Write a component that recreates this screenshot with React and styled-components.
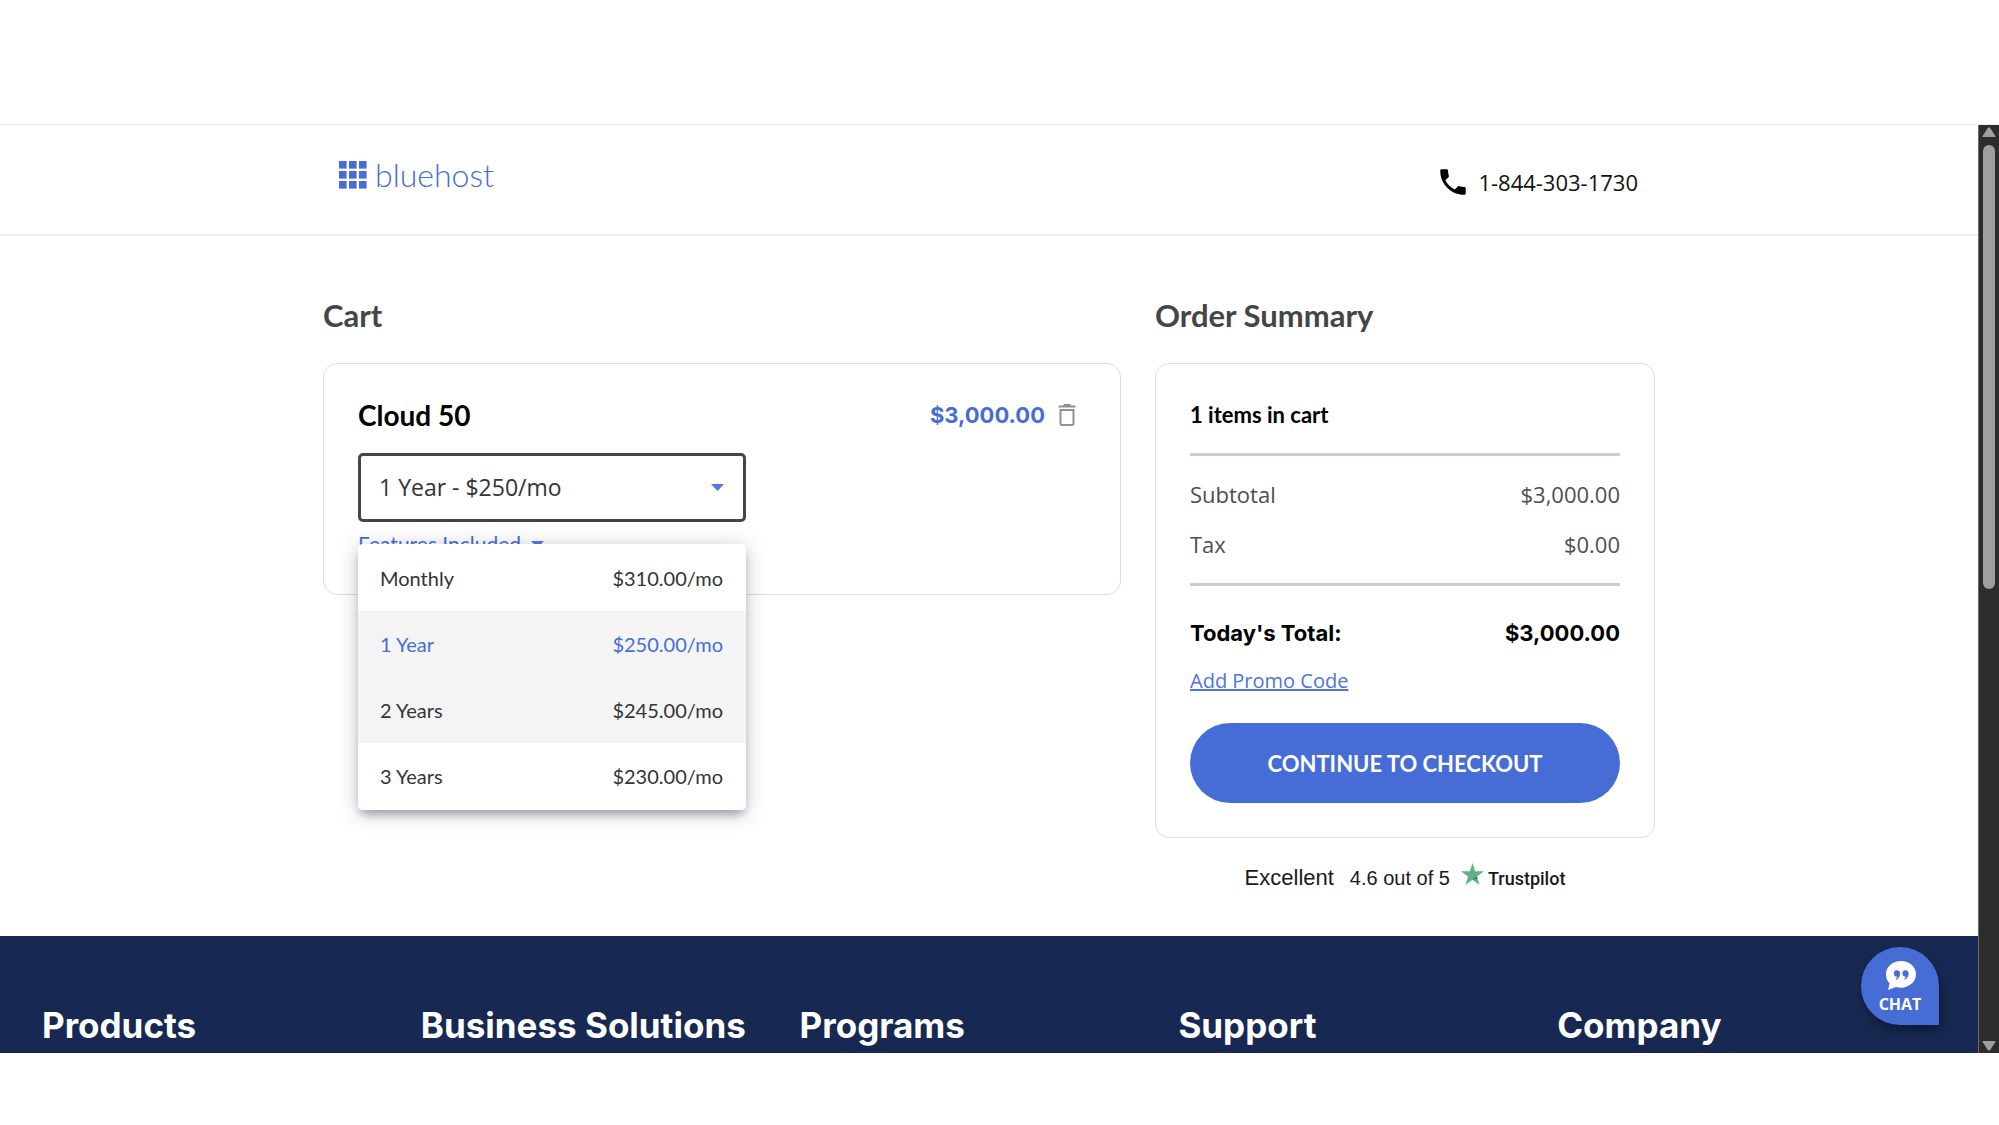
import { useState } from "react";
import styled, { createGlobalStyle } from "styled-components";
import { MdPhone } from "react-icons/md";

const GlobalStyle = createGlobalStyle`
  * {
    box-sizing: border-box;
  }

  body {
    margin: 0;
    background: #fff;
    color: #000;
    font-family: Lato, sans-serif;
  }

  h1, h2, h3, p, ul, dl, dd {
    margin: 0;
    padding: 0;
    list-style: none;
  }

  button, select {
    font-family: inherit;
    cursor: pointer;
  }
`;

const Frame = styled.div`
  display: flex;
  margin: 124px 0 72px;
  border-top: 1px solid #ededed;
`;

const Page = styled.div`
  position: relative;
  flex: 1;
  min-width: 0;
`;

const Header = styled.header`
  border-bottom: 2px solid #eeeeef;
`;

const HeaderInner = styled.div`
  display: flex;
  justify-content: space-between;
  align-items: flex-start;
  max-width: 1332px;
  min-height: 109px;
  margin: 0 auto;
  padding: 29px 17px 0 16px;
`;

const Logo = styled.a`
  display: flex;
  align-items: center;
  gap: 8px;
  height: 42px;
  color: #466dd6;
  font-size: 32px;
  font-weight: 300;
  line-height: 42px;
  text-decoration: none;
`;

const Phone = styled.a`
  display: flex;
  align-items: center;
  gap: 8px;
  padding-top: 10px;
  color: #111;
  font-family: "Open Sans", sans-serif;
  font-size: 22px;
  line-height: 36px;
  text-decoration: none;

  svg {
    color: #000;
  }
`;

const Main = styled.main`
  display: grid;
  grid-template-columns: minmax(0, 1fr) 500px;
  gap: 34px;
  align-items: start;
  max-width: 1332px;
  margin: 0 auto;
  padding: 61px 0 41px;
`;

const Title = styled.h2`
  margin-bottom: 30px;
  color: #444547;
  font-size: 31px;
  font-weight: 700;
  line-height: 36px;
`;

const Card = styled.div`
  padding: 35px 34px 34px;
  border: 1px solid #dcdde4;
  border-radius: 14px;
`;

const ItemHead = styled.div`
  display: flex;
  justify-content: space-between;
  align-items: center;
  margin-bottom: 22px;
`;

const ItemName = styled.h3`
  font-size: 28px;
  font-weight: 700;
  line-height: 32px;
`;

const ItemPrice = styled.div`
  display: flex;
  align-items: center;
  gap: 13px;
  padding-right: 10px;
  color: #466dd6;
  font-family: Inter, sans-serif;
  font-size: 22px;
  font-weight: 700;
  line-height: 32px;
`;

const IconButton = styled.button`
  display: flex;
  padding: 0;
  border: 0;
  background: none;
`;

const TermPicker = styled.div`
  position: relative;
  width: 388px;
  max-width: 100%;

  > svg {
    position: absolute;
    top: 31px;
    right: 22px;
    pointer-events: none;
  }
`;

const TermSelect = styled.select`
  display: block;
  width: 100%;
  height: 69px;
  padding: 0 18px 2px;
  border: 3px solid #444547;
  border-radius: 5px;
  outline: 0;
  appearance: none;
  background: #fff;
  color: #333437;
  font-family: "Open Sans", sans-serif;
  font-size: 23px;
`;

const TermMenu = styled.ul`
  position: absolute;
  z-index: 1;
  top: 91px;
  left: 0;
  right: 0;
  padding: 1px 0;
  overflow: hidden;
  border-radius: 5px;
  background: #fff;
`;

const MenuShadow = styled.div`
  position: absolute;
  top: 91px;
  left: 0;
  right: 0;
  height: 266px;
  border-radius: 5px;
  box-shadow: 0 7px 8px -3px rgba(40, 48, 75, 0.35), 0 3px 20px rgba(40, 48, 75, 0.28);
`;

const TermOption = styled.button`
  display: flex;
  justify-content: space-between;
  align-items: center;
  width: 100%;
  height: 66px;
  padding: 0 23px 0 22px;
  border: 0;
  background: ${({ $shaded }) => ($shaded ? "#f4f4f4" : "#fff")};
  color: ${({ $active }) => ($active ? "#466dd6" : "#333437")};
  font-size: 20px;
`;

const Features = styled.button`
  display: flex;
  align-items: center;
  gap: 10px;
  margin-top: 6px;
  padding: 0;
  border: 0;
  background: none;
  color: #466dd6;
  font-size: 21px;
  line-height: 32px;
`;

const CountLine = styled.h3`
  padding-bottom: 22px;
  border-bottom: 3px solid #c9ccd4;
  font-size: 22px;
  font-weight: 700;
  line-height: 32px;
`;

const Charges = styled.dl`
  display: grid;
  gap: 20px;
  padding: 23px 0 24px;
  border-bottom: 3px solid #c9ccd4;
`;

const Charge = styled.div`
  display: flex;
  justify-content: space-between;
  color: #4d4e51;
  font-family: "Open Sans", sans-serif;
  font-size: 22px;
  line-height: 30px;
`;

const Total = styled.div`
  display: flex;
  justify-content: space-between;
  margin: 31px 0 17px;
  font-family: Inter, sans-serif;
  font-size: 22px;
  font-weight: 700;
  line-height: 32px;
`;

const PromoLink = styled.a`
  display: block;
  width: fit-content;
  color: #4e74da;
  font-family: "Open Sans", sans-serif;
  font-size: 20px;
  line-height: 30px;
`;

const Checkout = styled.button`
  display: block;
  width: 100%;
  height: 80px;
  margin-top: 27px;
  border: 0;
  border-radius: 40px;
  background: #466dd6;
  color: #fff;
  font-size: 22px;
  font-weight: 700;
`;

const Rating = styled.div`
  display: flex;
  justify-content: center;
  align-items: baseline;
  gap: 16px;
  margin-top: 24px;
  color: #18191c;
  font-family: "Liberation Sans", Arial, sans-serif;
  font-size: 22px;
  line-height: 32px;
`;

const Score = styled.div`
  display: flex;
  align-items: baseline;
  gap: 11px;
  font-size: 20px;
`;

const Trustpilot = styled.span`
  display: flex;
  align-items: baseline;
  gap: 4px;
  font-family: Roboto, sans-serif;
  font-size: 18px;
  font-weight: 500;
`;

const Footer = styled.footer`
  display: grid;
  grid-template-columns: repeat(5, minmax(0, 1fr));
  padding: 69px 42px 8px;
  background: #172952;
`;

const FooterTitle = styled.h2`
  color: #fff;
  font-family: Inter, sans-serif;
  font-size: 35px;
  font-weight: 700;
  line-height: 40px;
  white-space: nowrap;
`;

const ChatButton = styled.button`
  position: absolute;
  right: 39px;
  bottom: 28px;
  display: flex;
  flex-direction: column;
  align-items: center;
  gap: 2px;
  width: 78px;
  height: 78px;
  padding: 14px 0 0;
  border: 0;
  border-radius: 50% 50% 0 50%;
  background: #466dd6;
  box-shadow: 2px 6px 10px rgba(0, 0, 0, 0.35);
  color: #fff;
  font-family: "Open Sans", sans-serif;
  font-size: 16px;
  font-weight: 700;
  line-height: 24px;
`;

const ScrollTrack = styled.div`
  display: flex;
  flex-direction: column;
  align-items: center;
  width: 21px;
  padding: 2px 0;
  border-left: 1px solid #6d6d70;
  background: #2c2c2c;

  svg:last-child {
    margin-top: auto;
  }
`;

const ScrollThumb = styled.div`
  width: 12px;
  height: 48%;
  margin-top: 8px;
  border-radius: 6px;
  background: #9f9f9f;
`;

const LogoMark = () => (
    <svg width="28" height="28" viewBox="0 0 28 28" fill="currentColor" aria-hidden="true">
        {[0, 10, 20].map((y) => [0, 10, 20].map((x) => (
            <rect key={`${x}-${y}`} x={x} y={y} width="7.6" height="7.6" />
        )))}
    </svg>
);

const Caret = () => (
    <svg width="13" height="7" viewBox="0 0 13 7" fill="#5178dc" aria-hidden="true">
        <path d="M0 0h13L6.500 7z" />
    </svg>
);

const TrashIcon = () => (
    <svg width="18" height="22" viewBox="0 0 18 22" fill="none" stroke="#919193" aria-hidden="true">
        <path d="M5.500 1h7" strokeWidth="2" />
        <path d="M0.500 2.500h17" strokeWidth="2" />
        <path d="M2.500 6h13v13.500a1.500 1.500 0 0 1-1.500 1.500H4a1.500 1.500 0 0 1-1.500-1.500z" strokeWidth="2" />
    </svg>
);

const StarIcon = () => (
    <svg width="23" height="22" viewBox="0 0 23 22" aria-hidden="true">
        <path d="M11.500 0l2.700 8.300H23l-7.100 5.200L18.600 22l-7.100-5.200L4.400 22l2.700-8.500L0 8.300h8.800z" fill="#5fb383" />
        <path d="M16.600 15.500l-.6-2-4.500 3.300z" fill="#2f6a55" />
    </svg>
);

const ChatIcon = () => (
    <svg width="31" height="29" viewBox="0 0 31 29" aria-hidden="true">
        <path d="M16 0C24.300 0 31 5.900 31 13.300S24.300 26.700 16 26.700c-1.800 0-3.500-.2-5-.7L3 29l1.600-6.500C2.200 20.200 1 17 1 13.300 1 5.900 7.700 0 16 0z" fill="#fff" />
        <path d="M11.700 9.300a3.300 3.300 0 0 1 3.300 3.500c0 2.600-1.300 5-3.900 6l-.5-1.100c1.100-.6 1.700-1.200 1.800-2a3.200 3.200 0 1 1-.7-6.400zM20.300 9.300a3.300 3.300 0 0 1 3.300 3.500c0 2.600-1.300 5-3.900 6l-.5-1.100c1.100-.6 1.700-1.200 1.800-2a3.200 3.200 0 1 1-.7-6.400z" fill="#466dd6" />
    </svg>
);

const ScrollArrow = ({ down }) => (
    <svg width="14" height="10" viewBox="0 0 14 10" fill="#9f9f9f" aria-hidden="true">
        <path d={down ? "M1.500 0h11q1.500 0 .7 1.300L8.200 9q-1.200 1.600-2.400 0L.8 1.300Q0 0 1.500 0z" : "M1.500 10h11q1.500 0 .7-1.300L8.200 1Q7-.6 5.800 1L.8 8.700Q0 10 1.500 10z"} />
    </svg>
);

const terms = [
    { id: "monthly", name: "Monthly", short: "$310/mo", price: "$310.00/mo" },
    { id: "1y", name: "1 Year", short: "$250/mo", price: "$250.00/mo" },
    { id: "2y", name: "2 Years", short: "$245/mo", price: "$245.00/mo" },
    { id: "3y", name: "3 Years", short: "$230/mo", price: "$230.00/mo" },
];

const footerTitles = ["Products", "Business Solutions", "Programs", "Support", "Company"];

const CartItem = () => {
    const [term, setTerm] = useState("1y");
    const [hovered, setHovered] = useState("2y");

    return (
        <Card>
            <ItemHead>
                <ItemName>Cloud 50</ItemName>
                <ItemPrice>
                    $3,000.00
                    <IconButton aria-label="Remove Cloud 50"><TrashIcon /></IconButton>
                </ItemPrice>
            </ItemHead>
            <TermPicker>
                <TermSelect aria-label="Billing term" value={term} onChange={(e) => setTerm(e.target.value)}>
                    {terms.map((t) => (
                        <option key={t.id} value={t.id}>{t.name} - {t.short}</option>
                    ))}
                </TermSelect>
                <Caret />
                <MenuShadow />
                <TermMenu>
                    {terms.map((t) => (
                        <li key={t.id}>
                            <TermOption
                                $active={t.id === term}
                                $shaded={t.id === term || t.id === hovered}
                                onMouseEnter={() => setHovered(t.id)}
                                onClick={() => setTerm(t.id)}
                            >
                                <span>{t.name}</span>
                                <span>{t.price}</span>
                            </TermOption>
                        </li>
                    ))}
                </TermMenu>
            </TermPicker>
            <Features>Features Included <Caret /></Features>
        </Card>
    );
};

const OrderSummary = () => (
    <section>
        <Title>Order Summary</Title>
        <Card>
            <CountLine>1 items in cart</CountLine>
            <Charges>
                <Charge><dt>Subtotal</dt><dd>$3,000.00</dd></Charge>
                <Charge><dt>Tax</dt><dd>$0.00</dd></Charge>
            </Charges>
            <Total><span>Today's Total:</span><span>$3,000.00</span></Total>
            <PromoLink href="#promo">Add Promo Code</PromoLink>
            <Checkout>CONTINUE TO CHECKOUT</Checkout>
        </Card>
        <Rating>
            <span>Excellent</span>
            <Score>
                <span>4.6 out of 5</span>
                <Trustpilot><StarIcon />Trustpilot</Trustpilot>
            </Score>
        </Rating>
    </section>
);

const App = () => (
    <>
        <GlobalStyle />
        <Frame>
            <Page>
                <Header>
                    <HeaderInner>
                        <Logo href="#home"><LogoMark />bluehost</Logo>
                        <Phone href="tel:18443031730"><MdPhone size={34} />1-844-303-1730</Phone>
                    </HeaderInner>
                </Header>
                <Main>
                    <section>
                        <Title>Cart</Title>
                        <CartItem />
                    </section>
                    <OrderSummary />
                </Main>
                <Footer>
                    {footerTitles.map((title) => <FooterTitle key={title}>{title}</FooterTitle>)}
                </Footer>
                <ChatButton><ChatIcon />CHAT</ChatButton>
            </Page>
            <ScrollTrack aria-hidden="true">
                <ScrollArrow />
                <ScrollThumb />
                <ScrollArrow down />
            </ScrollTrack>
        </Frame>
    </>
);

export default App;
